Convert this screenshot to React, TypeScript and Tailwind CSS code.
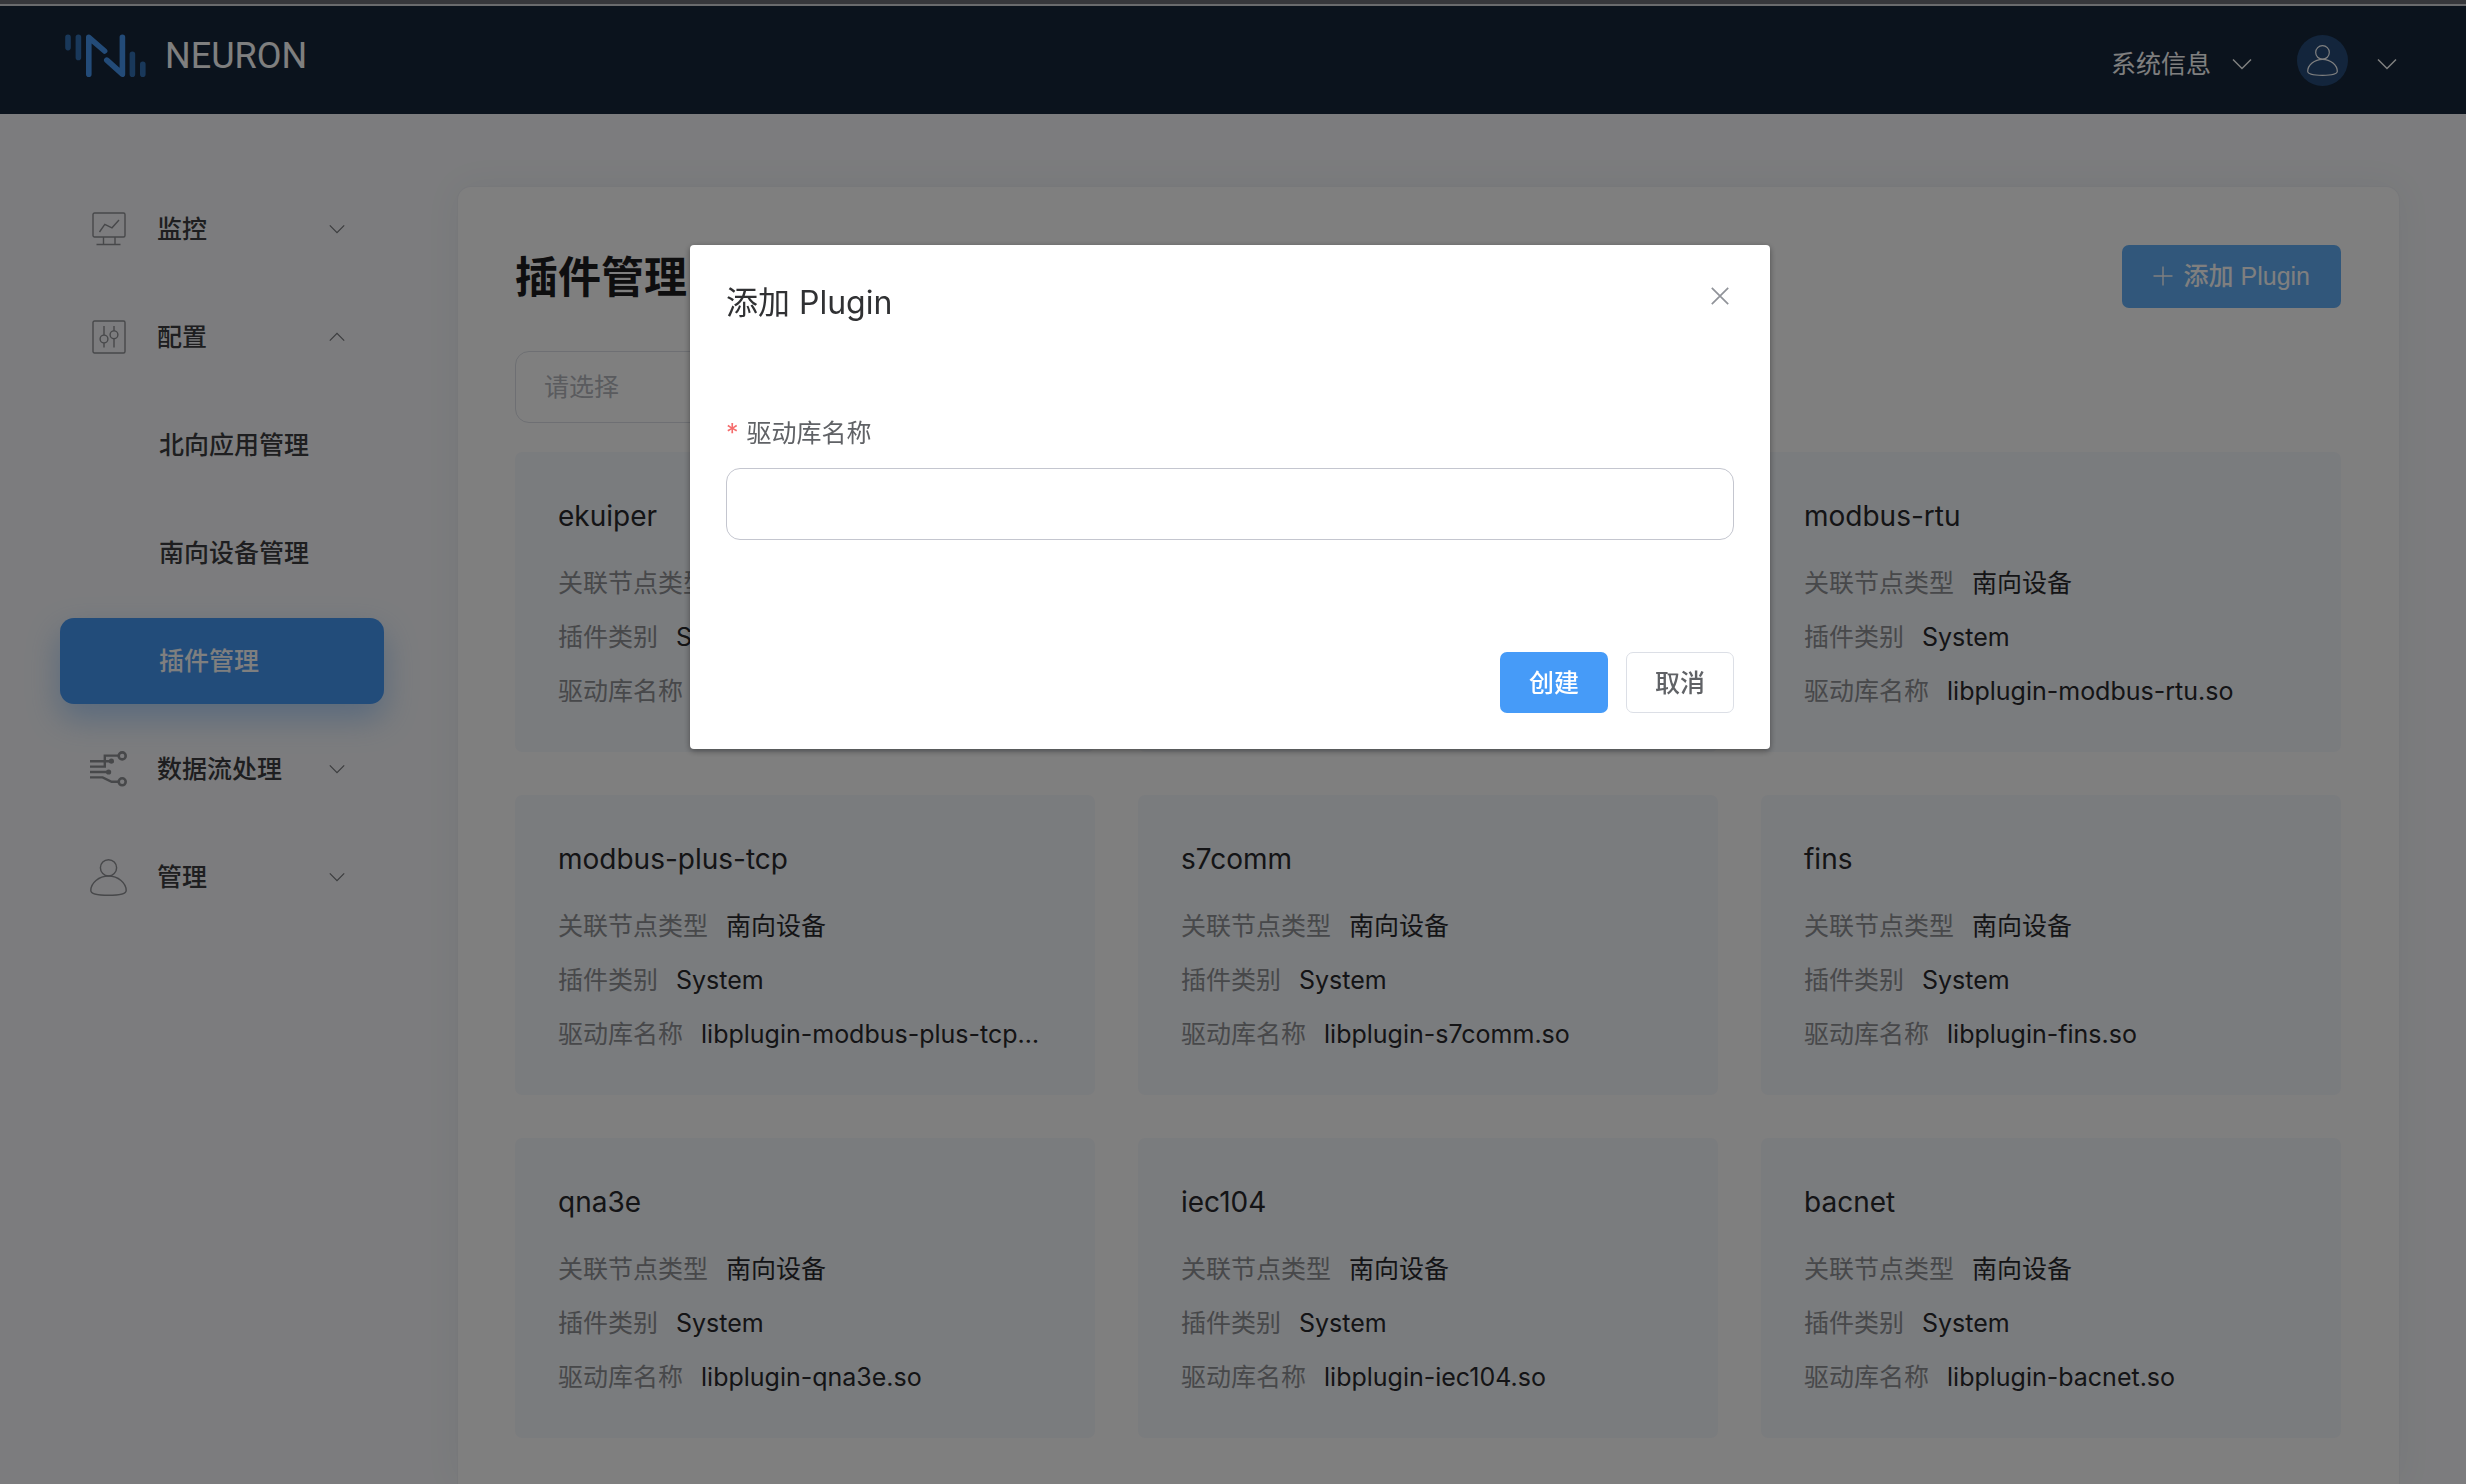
import type { ReactNode } from "react";

type Plugin = { name: string; kind: string; lib: string };

const plugins: Plugin[] = [
  { name: "ekuiper", kind: "北向应用", lib: "libplugin-ekuiper.so" },
  { name: "mqtt", kind: "北向应用", lib: "libplugin-mqtt.so" },
  { name: "modbus-rtu", kind: "南向设备", lib: "libplugin-modbus-rtu.so" },
  { name: "modbus-plus-tcp", kind: "南向设备", lib: "libplugin-modbus-plus-tcp.so" },
  { name: "s7comm", kind: "南向设备", lib: "libplugin-s7comm.so" },
  { name: "fins", kind: "南向设备", lib: "libplugin-fins.so" },
  { name: "qna3e", kind: "南向设备", lib: "libplugin-qna3e.so" },
  { name: "iec104", kind: "南向设备", lib: "libplugin-iec104.so" },
  { name: "bacnet", kind: "南向设备", lib: "libplugin-bacnet.so" },
];

function Chevron({ up = false, className }: { up?: boolean; className: string }) {
  return (
    <svg viewBox="0 0 20 12" fill="none" stroke="currentColor" strokeWidth="1.5" className={className} aria-hidden="true">
      <path d={up ? "M1 10.5L10 1.5L19 10.5" : "M1 1.5L10 10.5L19 1.5"} />
    </svg>
  );
}

function UserIcon({ className }: { className: string }) {
  return (
    <svg viewBox="0 0 36 36" fill="none" stroke="currentColor" strokeWidth="1.4" className={className} aria-hidden="true">
      <circle cx="18" cy="8.6" r="7.9" />
      <path d="M18 16.6C8.5 16.6 .8 23.5 .8 30.6C.8 34 8 35.3 18 35.3S35.2 34 35.2 30.6C35.2 23.5 27.5 16.6 18 16.6Z" />
    </svg>
  );
}

function MonitorIcon() {
  return (
    <svg viewBox="0 0 34 34" fill="none" stroke="currentColor" strokeWidth="1.4" className="size-[34px]" aria-hidden="true">
      <rect x="1" y="1" width="32" height="24" rx="1.5" />
      <path d="M11.5 25V32.5H23V25M4.5 32.5H28.5" />
      <path d="M7.5 20L12.8 12.3L20 15.8L27 8" />
    </svg>
  );
}

function SlidersIcon() {
  return (
    <svg viewBox="0 0 34 34" fill="none" stroke="currentColor" strokeWidth="1.4" className="size-[34px]" aria-hidden="true">
      <rect x="1" y="1" width="32" height="32" rx="1.5" />
      <circle cx="12" cy="19" r="3.9" />
      <circle cx="22" cy="14.8" r="3.9" />
      <path d="M12 6V15M12 23V27.5M22 6V11M22 18.7V27.5" />
    </svg>
  );
}

function FlowIcon() {
  return (
    <svg viewBox="0 0 38 36" fill="none" stroke="currentColor" strokeWidth="2.4" className="h-[36px] w-[38px]" aria-hidden="true">
      <path d="M0 10.2H20M0 15.6H14.8V4.6H28M0 21H18M0 26.4H12.6L21.6 30.8H28" />
      <circle cx="32.2" cy="4.9" r="3.5" strokeWidth="2.6" />
      <circle cx="32.2" cy="30.8" r="3.5" strokeWidth="2.6" />
      <circle cx="21.4" cy="10.2" r="2.6" fill="currentColor" stroke="none" />
      <circle cx="18.6" cy="21" r="2.6" fill="currentColor" stroke="none" />
    </svg>
  );
}

function Logo() {
  return (
    <svg viewBox="0 0 82 44" fill="none" strokeWidth="5.6" strokeLinecap="round" className="h-[44px] w-[82px]" aria-hidden="true">
      <path stroke="#3270b4" d="M3 3.3V13.6M13.4 3.3V23.4M67.4 20.3V40.2M77.8 30.2V40.2" />
      <path stroke="#4696f0" strokeLinejoin="round" d="M23.8 40.2V3.3L39.6 17M57.4 3.3V40.2L41.8 26.2" />
    </svg>
  );
}

function NavGroup({ icon, label, open = false }: { icon: ReactNode; label: string; open?: boolean }) {
  return (
    <button type="button" aria-expanded={open} className="flex h-[86px] w-full items-center pr-[39px] pl-[28px] text-[#3c3d40]">
      <span className="flex w-[41px] shrink-0 justify-center text-[#8f9095]">{icon}</span>
      <span className="ml-[28px] flex-1 text-left font-medium">{label}</span>
      <Chevron up={open} className="h-[10px] w-[16px] text-[#77787c]" />
    </button>
  );
}

function NavLink({ label, active = false }: { label: string; active?: boolean }) {
  return (
    <a
      href="#"
      aria-current={active ? "page" : undefined}
      className={
        active
          ? "flex h-[86px] items-center rounded-[14px] bg-[#4598f5] pl-[99px] font-medium text-white shadow-[0_14px_32px_rgba(69,152,245,0.4)]"
          : "flex h-[86px] items-center pl-[99px] font-medium text-[#3c3d40]"
      }
    >
      {label}
    </a>
  );
}

function Field({ label, value }: { label: string; value: string }) {
  return (
    <div className="flex h-[54px] items-center gap-[18px]">
      <dt className="shrink-0 text-[#8f9094]">{label}</dt>
      <dd className="truncate text-[#28292c]">{value}</dd>
    </div>
  );
}

function PluginCard({ plugin }: { plugin: Plugin }) {
  return (
    <article className="min-w-0 rounded-[7px] bg-[#f5f8fc] pt-[43px] pr-[49px] pb-[34px] pl-[43px]">
      <h2 className="mb-[19px] text-[28px] leading-[42px] text-[#28292c]">{plugin.name}</h2>
      <dl>
        <Field label="关联节点类型" value={plugin.kind} />
        <Field label="插件类别" value="System" />
        <Field label="驱动库名称" value={plugin.lib} />
      </dl>
    </article>
  );
}

function AddPluginDialog() {
  return (
    <div className="fixed inset-0 flex items-start justify-center bg-black/50 pt-[245px] pr-[6px]">
      <div
        role="dialog"
        aria-modal="true"
        aria-labelledby="dialog-title"
        className="w-[1080px] rounded-[4px] bg-white px-[36px] pb-[36px] shadow-[0_2px_6px_rgba(0,0,0,0.4)]"
      >
        <div className="flex h-[116px] items-center justify-between">
          <h2 id="dialog-title" className="text-[32px] text-[#303133]">
            添加 Plugin
          </h2>
          <button type="button" aria-label="关闭" className="mb-[14px] p-[5px] text-[#909399]">
            <svg viewBox="0 0 18 18" fill="none" stroke="currentColor" strokeWidth="1.7" className="size-[18px]" aria-hidden="true">
              <path d="M.8 .8L17.2 17.2M17.2 .8L.8 17.2" />
            </svg>
          </button>
        </div>
        <form className="pt-[54px]">
          <label htmlFor="library" className="flex h-[53px] items-start gap-[8px] leading-[36px] text-[#606266]">
            <span className="text-[#f56c6c]">*</span>
            驱动库名称
          </label>
          <input id="library" type="text" className="h-[72px] w-full rounded-[14px] border border-[#c4c6cf] px-[27px] outline-none" />
          <div className="flex justify-end gap-[18px] pt-[112px] font-medium">
            <button type="button" className="h-[61px] w-[108px] rounded-[7px] bg-[#469bf8] text-white">
              创建
            </button>
            <button type="button" className="h-[61px] w-[108px] rounded-[7px] border border-[#dcdfe6] text-[#606266]">
              取消
            </button>
          </div>
        </form>
      </div>
    </div>
  );
}

export default function App() {
  return (
    <div className="flex h-screen flex-col overflow-hidden bg-[#f8f9fc] font-[Inter,'Noto_Sans_CJK_SC',sans-serif] text-[25px] leading-[36px]">
      <div className="h-[6px] shrink-0 border-b-2 border-[#d4d6da] bg-[#6c6e76]" />
      <header className="flex h-[108px] shrink-0 items-center justify-between bg-[#16263a] pr-[69px] pl-[65px] text-white">
        <a href="#" className="flex items-center gap-[18px] pb-[8px]">
          <Logo />
          <span className="font-[Roboto,sans-serif] text-[36px]">NEURON</span>
        </a>
        <div className="flex items-center">
          <button type="button" className="flex items-center gap-[21px] pt-2">
            系统信息
            <Chevron className="h-[12px] w-[20px]" />
          </button>
          <button type="button" aria-label="用户" className="ml-[45px] flex items-center gap-[29px]">
            <span className="flex size-[51px] items-center justify-center rounded-full bg-[#264b79]">
              <UserIcon className="size-[31px]" />
            </span>
            <Chevron className="mt-2 h-[12px] w-[20px]" />
          </button>
        </div>
      </header>

      <div className="flex min-h-0 flex-1 gap-[73px] pt-[72px] pr-[66px] pl-[60px]">
        <nav className="flex w-[324px] shrink-0 flex-col gap-[22px]">
          <NavGroup icon={<MonitorIcon />} label="监控" />
          <NavGroup icon={<SlidersIcon />} label="配置" open />
          <NavLink label="北向应用管理" />
          <NavLink label="南向设备管理" />
          <NavLink label="插件管理" active />
          <NavGroup icon={<FlowIcon />} label="数据流处理" />
          <NavGroup icon={<UserIcon className="size-[37px]" />} label="管理" />
        </nav>

        <main className="min-w-0 flex-1 rounded-t-[14px] border border-b-0 border-[#eef0f5] bg-white pt-[58px] pr-[58px] pl-[57px] shadow-[0_0_36px_rgba(40,60,100,0.06)]">
          <div className="flex h-[63px] items-center justify-between">
            <h1 className="text-[43px] font-bold text-[#1c1c1e]">插件管理</h1>
            <button
              type="button"
              className="flex h-[63px] items-center gap-[11px] rounded-[7px] bg-[#62aef6] px-[31px] pb-[2px] font-['Liberation_Sans','Noto_Sans_CJK_SC',sans-serif] font-medium text-white"
            >
              <svg viewBox="0 0 20 20" stroke="currentColor" strokeWidth="1.4" className="size-[20px]" aria-hidden="true">
                <path d="M10 .5V19.5M.5 10H19.5" />
              </svg>
              添加 Plugin
            </button>
          </div>
          <select
            aria-label="请选择"
            className="mt-[43px] block h-[72px] w-[324px] appearance-none rounded-[14px] border border-[#dcdfe6] bg-white px-[28px] text-[#b4b6bc]"
          >
            <option>请选择</option>
          </select>
          <div className="mt-[29px] grid grid-cols-3 gap-[43px]">
            {plugins.map((plugin) => (
              <PluginCard key={plugin.name} plugin={plugin} />
            ))}
          </div>
        </main>
      </div>

      <AddPluginDialog />
    </div>
  );
}
